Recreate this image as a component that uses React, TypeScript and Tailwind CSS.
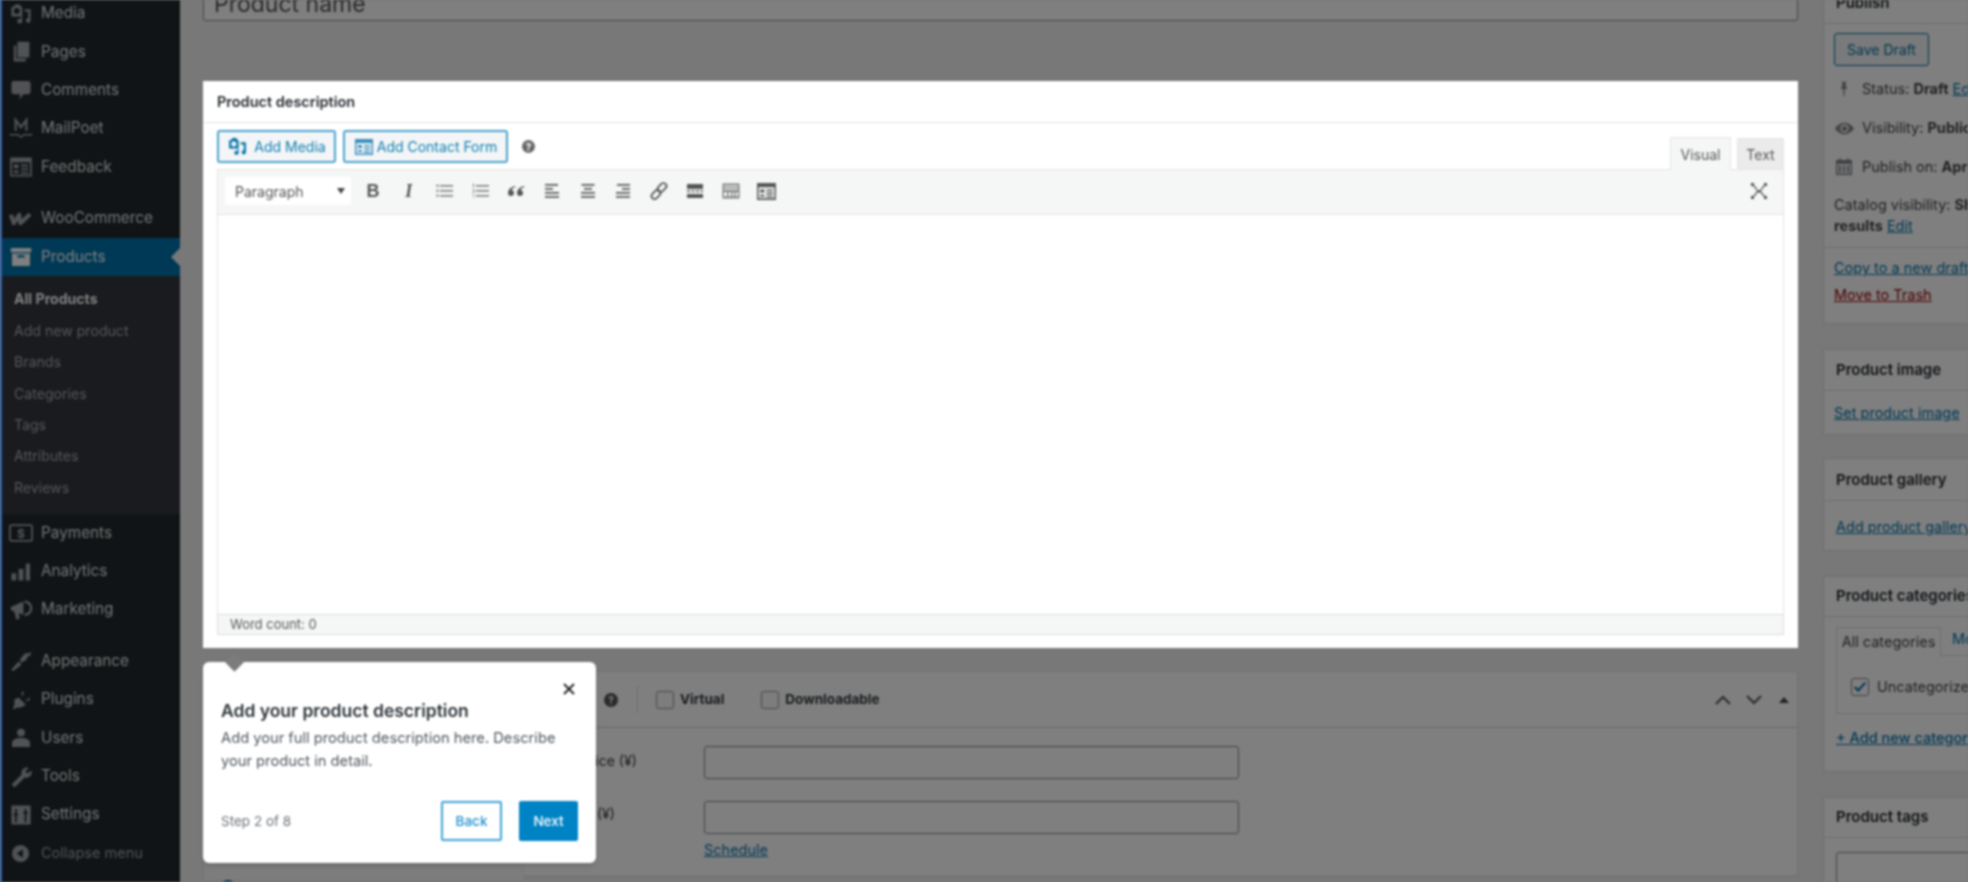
import type { ReactNode } from "react";

const font = { fontFamily: "Inter, 'Noto Sans', sans-serif" };

function Ico({ children, className = "w-6 h-6" }: { children: ReactNode; className?: string }) {
  return (
    <svg viewBox="0 0 20 20" fill="currentColor" className={className}>
      {children}
    </svg>
  );
}

const MediaIcon = () => (
  <>
    <path fillRule="evenodd" d="M2 4h2l1-2h4l1 2h1v8H7l-1 0H2zM6.500 5a2.500 2.500 0 100 5 2.500 2.500 0 000-5z" />
    <path d="M13 6h5v9.500a2 2 0 11-2-2V8h-3z" />
    <circle cx="9" cy="16" r="2" />
    <path d="M10 12h1v4h-1z" />
  </>
);

const FormIcon = () => (
  <path
    fillRule="evenodd"
    d="M1 2h18v16H1zM2.500 6v10.500h15V6zM4 8h4v3H4zM10 8h6v1.500h-6zM10 11h6v1.500h-6zM4 13h4v2H4zM10 14h6v1.500h-6z"
  />
);

const menuTop = [
  {
    label: "Media",
    icon: <MediaIcon />,
  },
  {
    label: "Pages",
    icon: <path d="M7 1.500h10v13H7zM4 4.500h2v11h8v2.500H4z" />,
  },
  {
    label: "Comments",
    icon: <path d="M4 2.500h12a2 2 0 012 2v7a2 2 0 01-2 2h-4l-3 4.500v-4.500H4a2 2 0 01-2-2v-7a2 2 0 012-2z" />,
  },
  {
    label: "MailPoet",
    icon: (
      <g fill="none" stroke="currentColor">
        <path strokeWidth="1.800" d="M5.500 11.500V2.500l4.500 6 4.500-6v9" />
        <path strokeWidth="1.200" d="M0.500 14.800h7l2.500 2 2.500-2h7" />
      </g>
    ),
  },
  {
    label: "Feedback",
    icon: <FormIcon />,
  },
];

const menuBottom = [
  {
    label: "Payments",
    icon: (
      <>
        <rect x="0.800" y="3.500" width="18.400" height="13" rx="1.500" fill="none" stroke="currentColor" strokeWidth="1.500" />
        <text x="10" y="14" fontSize="10" fontWeight="700" textAnchor="middle" fontFamily="Inter, sans-serif">
          $
        </text>
      </>
    ),
  },
  {
    label: "Analytics",
    icon: <path d="M2 11h4v6H2zM8 7.500h4V17H8zM14 3h3.500v14H14z" />,
  },
  {
    label: "Marketing",
    icon: (
      <>
        <path d="M1.500 7.500L12 3v11L8 12.500 9 17l-3 1-1.500-6.500-3-1.500z" />
        <path d="M13 2a6.500 6.500 0 010 13v-2a4.500 4.500 0 000-9z" />
      </>
    ),
  },
];

const menuAdmin = [
  {
    label: "Appearance",
    icon: <path d="M2 17l6-6.500 2.500 2.500L3.500 18.500zM9 9l4-5 6-1-2 3-2 .5 0 2-4.500 3z" />,
  },
  {
    label: "Plugins",
    icon: <path d="M3 18l1.500-4V9.500L8 8l6 6-3.500 2-4 .5zM10.500 3l2 .5-1.500 4.500zM17 8l.5 2-4.500 1z" />,
  },
  {
    label: "Users",
    icon: (
      <>
        <circle cx="10" cy="5.500" r="3.300" />
        <path d="M2.500 17.500v-3c0-3 3-4.500 7.500-4.500s7.500 1.500 7.500 4.500v3z" />
      </>
    ),
  },
  {
    label: "Tools",
    icon: (
      <path d="M16.500 2.500a4.500 4.500 0 00-6 5.500L3 15.500a1.800 1.800 0 002.500 2.500L13 10.500a4.500 4.500 0 005.500-6L15.500 7 13.500 5.500z" />
    ),
  },
  {
    label: "Settings",
    icon: <path fillRule="evenodd" d="M2 2h16v16H2zM5 5v4H3.800v1.500H5V16h1.500v-5.500h1V9h-1V5zM13 5v2.500h-1V9h1v7h1.500V9h1V7.500h-1V5z" />,
  },
];

const subMenu = ["Add new product", "Brands", "Categories", "Tags", "Attributes", "Reviews"];

function MenuItem({ label, icon, active }: { label: string; icon: ReactNode; active?: boolean }) {
  return (
    <div
      className={`relative flex h-[38.4px] items-center text-[15.300px] ${
        active ? "bg-[#0073aa] text-white" : "text-[#e4e4e4]"
      }`}
    >
      <span className={`ml-[6.500px] w-[32.500px] shrink-0 ${active ? "text-white" : "text-[#a0a5aa]"}`}>
        <Ico>{icon}</Ico>
      </span>
      <span>{label}</span>
      {active && (
        <span className="absolute right-0 top-[10px] border-y-[9px] border-r-[9px] border-y-transparent border-r-[#f1f1f1]" />
      )}
    </div>
  );
}

function Sidebar() {
  return (
    <aside className="w-[178px] shrink-0 bg-[#23282d]">
      <div className="mt-[-5.500px]">
        {menuTop.map((item) => (
          <MenuItem key={item.label} {...item} />
        ))}
        <div className="h-[13px]" />
        <MenuItem
          label="WooCommerce"
          icon={
            <path
              fill="none"
              stroke="currentColor"
              strokeWidth="3.400"
              strokeLinejoin="round"
              d="M1.500 6.500l2.500 7 4.500-7 1 7 8-7.500"
            />
          }
        />
        <MenuItem
          label="Products"
          active
          icon={<path fillRule="evenodd" d="M1.500 2.500h17v3.500h-17zM2.500 7h15v10.500h-15zM7 8.500v2h6v-2z" />}
        />
        <div className="bg-[#32373c] pb-[11px] pt-[7px] text-[14.100px] text-[#a8adb2]">
          <div className="flex h-[31.400px] items-center pl-[12px] font-bold text-white">All Products</div>
          {subMenu.map((label) => (
            <div key={label} className="flex h-[31.400px] items-center pl-[12px]">
              {label}
            </div>
          ))}
        </div>
        {menuBottom.map((item) => (
          <MenuItem key={item.label} {...item} />
        ))}
        <div className="h-[13px]" />
        {menuAdmin.map((item) => (
          <MenuItem key={item.label} {...item} />
        ))}
        <div className="flex h-[38.4px] items-center text-[14.500px] text-[#a0a5aa]">
          <span className="ml-[8.500px] w-[30.500px] shrink-0">
            <Ico className="h-[19px] w-[19px]">
              <path fillRule="evenodd" d="M10 1a9 9 0 100 18 9 9 0 000-18zM12.500 5.500v9L6 10z" />
            </Ico>
          </span>
          <span>Collapse menu</span>
        </div>
      </div>
    </aside>
  );
}

const lines = (rows: [number, number][]) =>
  rows.map(([x, y], i) => <rect key={i} x={x} y={y} width={x === 5 ? 11 : 13} height="1.600" />);

const toolbarIcons: { key: string; node: ReactNode }[] = [
  {
    key: "bold",
    node: <span className="text-[18px] font-bold leading-none" style={{ fontFamily: "'Liberation Sans', sans-serif" }}>B</span>,
  },
  {
    key: "italic",
    node: <span className="text-[18px] font-bold italic leading-none" style={{ fontFamily: "'Liberation Serif', serif" }}>I</span>,
  },
  {
    key: "ul",
    node: (
      <span className="opacity-75">
        <Ico className="h-5 w-5">
          {lines([[6, 4], [6, 9], [6, 14]])}
          <circle cx="3.500" cy="4.800" r="1.200" />
          <circle cx="3.500" cy="9.800" r="1.200" />
          <circle cx="3.500" cy="14.800" r="1.200" />
        </Ico>
      </span>
    ),
  },
  {
    key: "ol",
    node: (
      <span className="opacity-75">
        <Ico className="h-5 w-5">
          {lines([[6, 4], [6, 9], [6, 14]])}
          <path d="M3 2.500h1v4H3zM2.500 8.500h2v.8h-2zM3.500 9.300h1v1.500h-1zM2.500 10.800h2v.8h-2zM2.500 13h2v.8h-2zM2.500 15.500h2v.8h-2z" />
        </Ico>
      </span>
    ),
  },
  {
    key: "quote",
    node: (
      <Ico className="h-5 w-5">
        <path d="M9 5C5 6 2 8.500 2 12a3 3 0 103.500-3C6 7.500 7.500 6.500 9.500 6zM18 5c-4 1-7 3.500-7 7a3 3 0 103.500-3c.5-1.500 2-2.500 4-3z" />
      </Ico>
    ),
  },
  {
    key: "left",
    node: (
      <Ico className="h-5 w-5">
        <path d="M3 3h13v1.800H3zM3 7h8v1.800H3zM3 11h14v1.800H3zM3 15h14v1.800H3z" />
      </Ico>
    ),
  },
  {
    key: "center",
    node: (
      <Ico className="h-5 w-5">
        <path d="M3.500 3h13v1.800h-13zM6 7h8v1.800H6zM3 11h14v1.800H3zM3 15h14v1.800H3z" />
      </Ico>
    ),
  },
  {
    key: "right",
    node: (
      <Ico className="h-5 w-5">
        <path d="M4 3h13v1.800H4zM9 7h8v1.800H9zM3 11h14v1.800H3zM3 15h14v1.800H3z" />
      </Ico>
    ),
  },
  {
    key: "link",
    node: (
      <Ico className="h-5 w-5">
        <g fill="none" stroke="currentColor" strokeWidth="1.800">
          <rect x="10" y="1.500" width="6" height="10" rx="3" transform="rotate(45 13 6.500)" />
          <rect x="4" y="8.500" width="6" height="10" rx="3" transform="rotate(45 7 13.500)" />
        </g>
      </Ico>
    ),
  },
  {
    key: "more",
    node: (
      <Ico className="h-5 w-5">
        <path d="M2 3h16v5H2zM2 9.500h3v1.500H2zM6.500 9.500h3v1.500h-3zM11 9.500h3v1.500h-3zM15.500 9.500H18v1.500h-2.500zM2 13h16v4H2z" />
      </Ico>
    ),
  },
  {
    key: "kitchen",
    node: (
      <Ico className="h-5 w-5">
        <path
          fillRule="evenodd"
          opacity="0.750"
          d="M1.500 2.500h17v15h-17zM3 4.500v1.500h14V4.500zM3 7.500v1.500h14V7.500zM3 11v4.500h3V11zM7.500 11v4.500h2.500V11zM11.500 11v4.500h2V11zM15 11v4.500h2V11z"
        />
      </Ico>
    ),
  },
  {
    key: "form",
    node: (
      <Ico className="h-[21px] w-[21px]">
        <FormIcon />
      </Ico>
    ),
  },
];

function Editor() {
  return (
    <div className="mx-[14px] h-[525px]">
      <div className="flex h-[46px] items-start justify-between pt-[7px]">
        <div className="flex items-center text-[14px] text-[#0f7fb3]">
          <button className="flex h-[33px] w-[119px] items-center justify-center gap-[6px] rounded-[3px] border-2 border-[#4aa3cf] bg-[#f3f5f6]">
            <span className="text-[#0073aa]">
              <Ico className="h-[21px] w-[21px]">
                <MediaIcon />
              </Ico>
            </span>
            Add Media
          </button>
          <button className="ml-[7px] flex h-[33px] w-[165px] items-center justify-center gap-[3px] rounded-[3px] border-2 border-[#4aa3cf] bg-[#f3f5f6]">
            <span className="text-[#3a8fbd]">
              <Ico className="h-[20px] w-[20px]">
                <FormIcon />
              </Ico>
            </span>
            Add Contact Form
          </button>
          <span className="ml-[14px] flex h-[13px] w-[13px] items-center justify-center rounded-full bg-[#666666] text-[10px] font-bold leading-none text-white">
            ?
          </span>
        </div>
        <div className="flex items-end text-[14px] text-[#555555]">
          <div className="relative top-[7px] flex h-[33px] w-[61px] items-center justify-center border border-b-0 border-[#e5e5e5] bg-[#f5f6f6]">
            Visual
          </div>
          <div className="relative top-[7px] ml-[6px] flex h-[32px] w-[47px] items-center justify-center border border-[#e5e5e5] bg-[#ebebeb] text-[#555555]">
            Text
          </div>
        </div>
      </div>
      <div className="flex h-[445px] flex-col border-x border-[#e5e5e5]">
        <div className="flex h-[46px] shrink-0 items-center border-y border-[#e5e5e5] bg-[#f5f6f6] pb-[2px] pl-[7px] pr-[14px] text-[#555555]">
          <div className="flex h-[28px] w-[126px] items-center justify-between bg-white pl-[10px] pr-[6px] text-[14px]">
            Paragraph
            <span className="border-x-[4px] border-t-[6px] border-x-transparent border-t-[#444444]" />
          </div>
          <div className="ml-[4px] flex">
            {toolbarIcons.map((t) => (
              <span key={t.key} className="flex h-[29px] w-[35.800px] items-center justify-center">
                {t.node}
              </span>
            ))}
          </div>
          <span className="ml-auto">
            <Ico className="h-5 w-5">
              <path d="M2 2h3v3H2zM15 2h3v3h-3zM2 15h3v3H2zM15 15h3v3h-3zM7.500 9h5v2.500h-5z" />
              <path stroke="currentColor" strokeWidth="1.200" d="M4.500 4.500l3.500 4M15.500 4.500l-3.500 4M4.500 15.500l3.500-4M15.500 15.500l-3.500-4" />
            </Ico>
          </span>
        </div>
        <div className="flex-1 bg-white" />
      </div>
      <div className="flex h-[21px] items-center border border-[#dddddd] bg-[#f5f6f6] pl-[12px] text-[13px] text-[#555555]">
        Word count: 0
      </div>
    </div>
  );
}

function Checkbox({ label }: { label: string }) {
  return (
    <div className="flex items-center gap-[6px]">
      <span className="h-[18px] w-[18px] rounded-[3px] border border-[#8a8f94] bg-[#fbfbfb]" />
      {label}
    </div>
  );
}

function ProductData() {
  return (
    <div className="mt-[23px] border border-[#e5e5e5] bg-white">
      <div className="flex h-[56px] items-center border-b border-[#cccccc] pl-[400px] pr-[8px] text-[13.500px] font-bold text-[#32373c]">
        <span className="flex h-[14px] w-[14px] items-center justify-center rounded-full bg-[#555555] text-[10px] leading-none text-white">
          ?
        </span>
        <span className="ml-[19px] h-[27px] w-px bg-[#dddddd]" />
        <div className="ml-[18px] flex gap-[37px]">
          <Checkbox label="Virtual" />
          <Checkbox label="Downloadable" />
        </div>
        <div className="ml-auto flex items-center gap-[15px] text-[#555555]">
          <svg viewBox="0 0 16 10" className="h-[10px] w-[16px]" fill="none" stroke="currentColor" strokeWidth="2">
            <path d="M1 9l7-7 7 7" />
          </svg>
          <svg viewBox="0 0 16 10" className="h-[10px] w-[16px]" fill="none" stroke="currentColor" strokeWidth="2">
            <path d="M1 1l7 7 7-7" />
          </svg>
          <span className="ml-[2px] border-x-[5px] border-b-[6px] border-x-transparent border-b-[#444444]" />
        </div>
      </div>
      <div className="flex h-[148px] border-b border-[#eeeeee]">
        <div className="w-[320px] shrink-0 border-r border-[#eeeeee] bg-[#fafafa] pl-[16px] pt-[152px]">
          <span className="block h-4 w-4 rounded-full bg-[#0073aa]" />
        </div>
        <div className="flex-1 pt-[18px] text-[14px] text-[#32373c]">
          <div className="flex h-[33px] items-start">
            <span className="w-[180px] whitespace-nowrap pl-[3px] pt-[4px]">Regular price (¥)</span>
            <span className="h-[33px] w-[535px] rounded-[3px] border border-[#7e8993] bg-white" />
          </div>
          <div className="mt-[22px] flex h-[33px] items-start">
            <span className="w-[180px] whitespace-nowrap pl-[3px] pt-[2px]">Sale price (¥)</span>
            <span className="h-[33px] w-[535px] rounded-[3px] border border-[#7e8993] bg-white" />
          </div>
          <div className="ml-[180px] mt-[5px] text-[14.500px] text-[#0073aa] underline">Schedule</div>
        </div>
      </div>
    </div>
  );
}

function SideBox({
  title,
  className,
  headerClass,
  children,
}: {
  title: string;
  className: string;
  headerClass: string;
  children: ReactNode;
}) {
  return (
    <div className={`border border-[#dddddd] bg-white ${className}`}>
      <div className={`flex items-center border-b border-[#dddddd] pl-[12px] text-[15px] font-semibold text-[#23282d] ${headerClass}`}>
        {title}
      </div>
      {children}
    </div>
  );
}

function RightColumn() {
  return (
    <div className="w-[315px] shrink-0 text-[14.500px] text-[#444444]">
      <div className="mt-[-17px] h-[341px] border border-[#dddddd] bg-white">
        <div className="flex h-[40px] items-center border-b border-[#dddddd] pl-[12px] text-[15px] font-semibold text-[#23282d]">
          Publish
        </div>
        <div className="h-[224px] border-b border-[#dddddd] pl-[10px] pt-[9px]">
          <button className="flex h-[33px] w-[95px] items-center justify-center rounded-[3px] border border-[#0071a1] bg-[#f3f5f6] text-[14px] text-[#0071a1]">
            Save Draft
          </button>
          <div className="mt-[11px] flex h-[24px] items-center">
            <span className="w-[28px] pl-[1px] text-[#82878c]">
              <Ico className="h-[18px] w-[18px]">
                <path d="M7 2h6l-1 1v4l2 3H11l-.5 8h-1L9 10H6l2-3V3z" />
              </Ico>
            </span>
            Status: <b className="ml-1">Draft</b> <span className="ml-1 text-[#0073aa] underline">Edit</span>
          </div>
          <div className="mt-[15px] flex h-[24px] items-center">
            <span className="w-[28px] text-[#82878c]">
              <Ico className="h-[21px] w-[21px]">
                <path fillRule="evenodd" d="M10 4.500c4 0 7 2.500 9 5.500-2 3-5 5.500-9 5.500S3 13 1 10c2-3 5-5.500 9-5.500zM10 6a4 4 0 100 8 4 4 0 000-8zM10 7.500a2.500 2.500 0 110 5 2.500 2.500 0 010-5z" />
              </Ico>
            </span>
            Visibility: <b className="ml-1">Public</b> <span className="ml-1 text-[#0073aa] underline">Edit</span>
          </div>
          <div className="mt-[15px] flex h-[24px] items-center">
            <span className="w-[28px] text-[#82878c]">
              <Ico className="h-[20px] w-[20px]">
                <path fillRule="evenodd" d="M2 3h3V1.500h2V3h6V1.500h2V3h3v15H2zM3.500 7v9.500h13V7zM5 8.500h2v7H5zM9 8.500h2v7H9zM13 8.500h2v7h-2z" />
              </Ico>
            </span>
            Publish on: <b className="ml-1">Apr 17, 2020</b>
          </div>
          <div className="mt-[15px] leading-[21px]">
            Catalog visibility: <b>Shop and search</b>
            <br />
            <b>results</b> <span className="text-[#0073aa] underline">Edit</span>
          </div>
        </div>
        <div className="pl-[10px] pt-[9px]">
          <div className="text-[#0073aa] underline">Copy to a new draft</div>
          <div className="mt-[5px] text-[#a00000] underline">Move to Trash</div>
        </div>
      </div>
      <SideBox title="Product image" className="mt-[25px] h-[86px]" headerClass="h-[41px] pt-[1px]">
        <div className="pl-[10px] pt-[11px] text-[#0073aa] underline">Set product image</div>
      </SideBox>
      <SideBox title="Product gallery" className="mt-[23px] h-[93px]" headerClass="h-[42px] pt-[1px]">
        <div className="pl-[12px] pt-[15px] text-[#0073aa] underline">Add product gallery images</div>
      </SideBox>
      <SideBox title="Product categories" className="mt-[25px] h-[196px]" headerClass="h-[40px]">
        <div className="px-[12px] pt-[9px]">
          <div className="flex items-end">
            <div className="relative top-px flex h-[29px] w-[105px] items-center justify-center border border-b-0 border-[#dddddd] bg-white">
              All categories
            </div>
            <div className="ml-[11px] pb-[5px] text-[#0073aa]">Most Used</div>
          </div>
          <div className="flex h-[59px] items-center border border-[#dddddd] pl-[14px] pt-[4px]">
            <span className="flex h-[18px] w-[18px] items-center justify-center rounded-[3px] border border-[#7e8993] bg-white text-[#0073aa]">
              <svg viewBox="0 0 16 16" className="h-[14px] w-[14px]" fill="none" stroke="currentColor" strokeWidth="2.500">
                <path d="M2 8l4 4 8-9" />
              </svg>
            </span>
            <span className="ml-[8px]">Uncategorized</span>
          </div>
          <div className="mt-[13px] font-medium text-[#0073aa] underline">+ Add new category</div>
        </div>
      </SideBox>
      <SideBox title="Product tags" className="mt-[25px] h-[120px]" headerClass="h-[40px]">
        <div className="px-[12px] pt-[14px]">
          <div className="h-[60px] rounded-[3px] border border-[#7e8993] bg-white" />
        </div>
      </SideBox>
    </div>
  );
}

function TourCard() {
  return (
    <div className="absolute left-[203px] top-[662px] z-30 h-[201px] w-[393px] rounded-[6px] bg-white pl-[18px] pr-[18px] pt-[36px] text-[#50575e] shadow-md">
      <span className="absolute left-[25px] top-[-6px] -z-10 h-[13px] w-[13px] rotate-45 bg-[#7c7c7c]" />
      <span className="absolute left-[359px] top-[20px] text-[#1e1e1e]">
        <svg viewBox="0 0 14 14" className="h-[14px] w-[14px]" fill="none" stroke="currentColor" strokeWidth="1.800">
          <path d="M2 2l10 10M12 2L2 12" />
        </svg>
      </span>
      <h3 className="relative text-[17.500px] font-semibold leading-[26px] text-[#2c3338]">Add your product description</h3>
      <p className="relative mt-[3px] text-[14.700px] leading-[23px]">
        Add your full product description here. Describe your product in detail.
      </p>
      <div className="absolute bottom-[22px] left-[18px] right-[18px] flex items-center justify-between">
        <span className="text-[13.500px] text-[#6b7278]">Step 2 of 8</span>
        <div className="flex gap-[17px] text-[13.500px] font-medium">
          <button className="h-[40px] w-[61px] rounded-[2px] border-2 border-[#3ba3d8] text-[#1f90cc]">Back</button>
          <button className="h-[40px] w-[59px] rounded-[2px] bg-[#0083c5] text-white">Next</button>
        </div>
      </div>
    </div>
  );
}

export default function App() {
  return (
    <div className="h-[882px] w-[1968px] overflow-hidden bg-[#787878]" style={font}>
      <div className="relative flex h-[882px] w-[1968px] overflow-hidden bg-[#f1f1f1] blur-[0.8px]">
        <div className="absolute inset-y-0 left-0 z-20 w-[2px] bg-[#2b5fae]" />
        <div className="absolute inset-0 z-10 bg-black/50" />
        <div className="w-[2px] shrink-0" />
        <Sidebar />
        <main className="flex flex-1 gap-[25px] pl-[23px]">
          <div className="w-[1595px] shrink-0">
            <div className="mt-[-26px] flex h-[47px] items-center rounded-[3px] border border-[#7e8993] bg-white pl-[10px] pt-[14px] text-[23px] text-[#555555]">
              Product name
            </div>
            <section className="relative z-20 mt-[60px] bg-white">
              <div className="flex h-[42px] items-center border-b border-[#e5e5e5] pl-[14px] text-[14.500px] font-semibold text-[#23282d]">
                Product description
              </div>
              <Editor />
            </section>
            <ProductData />
          </div>
          <RightColumn />
        </main>
        <TourCard />
      </div>
    </div>
  );
}
